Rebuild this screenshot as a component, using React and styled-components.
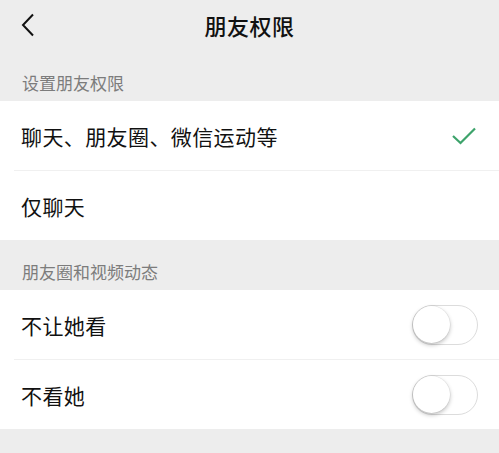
import React, { useState } from "react";
import styled, { createGlobalStyle } from "styled-components";

const GlobalStyle = createGlobalStyle`
  html, body {
    margin: 0;
    padding: 0;
    background: #ededed;
  }
  body {
    font-family: "Noto Sans CJK SC", "Noto Sans", sans-serif;
    color: #111;
  }
`;

const Page = styled.div`
  width: 499px;
  height: 453px;
  background: #ededed;
  overflow: hidden;
`;

const NavBar = styled.div`
  height: 50px;
  display: flex;
  align-items: center;
  justify-content: center;
  position: relative;
`;

const BackButton = styled.button`
  position: absolute;
  left: 14px;
  top: 10px;
  width: 28px;
  height: 30px;
  border: 0;
  padding: 0;
  background: none;
  display: flex;
  align-items: center;
  justify-content: center;
`;

const Title = styled.h1`
  margin: 0;
  font-size: 22px;
  font-weight: 500;
  letter-spacing: 0.5px;
`;

const SectionLabel = styled.div`
  height: ${(p) => p.$height}px;
  padding: 0 22px 6px;
  box-sizing: border-box;
  display: flex;
  align-items: flex-end;
  font-size: 17px;
  color: #7c7c7c;
`;

const List = styled.div`
  background: #fff;
`;

const Row = styled.div`
  height: 69px;
  display: flex;
  align-items: center;
  justify-content: space-between;
  padding: 0 22px 0 21px;
  position: relative;
  & + & {
    border-top: 1px solid #f0f0f0;
    margin-left: 14px;
    padding-left: 7px;
  }
`;

const Label = styled.span`
  font-size: 21px;
  letter-spacing: 0.4px;
`;

const Track = styled.button`
  width: 66px;
  height: 40px;
  border-radius: 20px;
  border: 1.5px solid ${(p) => (p.$on ? "#07c160" : "#dcdcdc")};
  background: ${(p) => (p.$on ? "#07c160" : "#fff")};
  padding: 0;
  position: relative;
  margin-right: -1px;
  cursor: pointer;
`;

const Knob = styled.span`
  position: absolute;
  top: 0;
  left: ${(p) => (p.$on ? "26px" : "0")};
  width: 37px;
  height: 37px;
  border-radius: 50%;
  background: #fff;
  box-shadow: 0 2px 4px rgba(0, 0, 0, 0.25), 0 0 0 0.5px rgba(0, 0, 0, 0.08);
`;

const Toggle = ({ on, onClick }) => (
  <Track $on={on} onClick={onClick}>
    <Knob $on={on} />
  </Track>
);

const Check = () => (
  <svg width="26" height="20" viewBox="0 0 26 20">
    <path d="M2 10 L9.5 17 L24 2.5" fill="none" stroke="#3da36b" strokeWidth="2.2" />
  </svg>
);

export default function App() {
  const [hide, setHide] = useState(false);
  const [mute, setMute] = useState(false);
  return (
    <Page>
      <GlobalStyle />
      <NavBar>
        <BackButton>
          <svg width="14" height="24" viewBox="0 0 14 24">
            <path d="M12 1.5 L2 12 L12 22.5" fill="none" stroke="#111" strokeWidth="2" />
          </svg>
        </BackButton>
        <Title>朋友权限</Title>
      </NavBar>
      <SectionLabel $height={51}>设置朋友权限</SectionLabel>
      <List>
        <Row>
          <Label>聊天、朋友圈、微信运动等</Label>
          <Check />
        </Row>
        <Row>
          <Label>仅聊天</Label>
        </Row>
      </List>
      <SectionLabel $height={50}>朋友圈和视频动态</SectionLabel>
      <List>
        <Row>
          <Label>不让她看</Label>
          <Toggle on={hide} onClick={() => setHide(!hide)} />
        </Row>
        <Row>
          <Label>不看她</Label>
          <Toggle on={mute} onClick={() => setMute(!mute)} />
        </Row>
      </List>
    </Page>
  );
}
